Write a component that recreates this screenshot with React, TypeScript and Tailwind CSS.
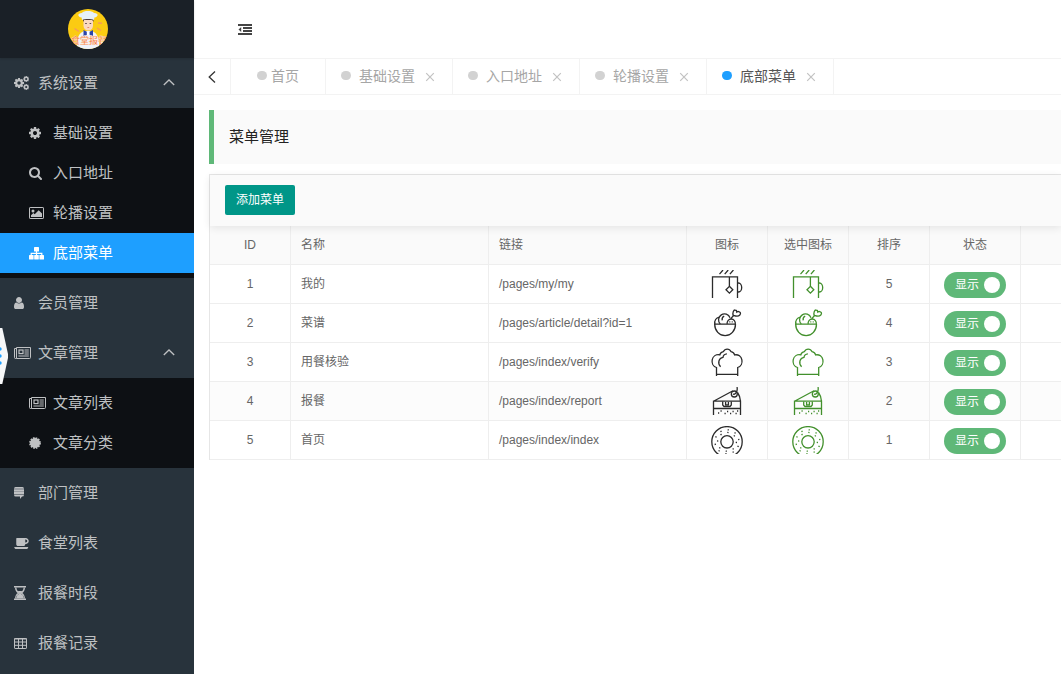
import React, { useState } from "react";

interface IconProps {
  className?: string;
}

interface MenuItem {
  title: string;
  icon: React.ReactNode;
  children?: MenuItem[];
}

interface Row {
  id: number;
  name: string;
  link: string;
  icon: React.FC<IconProps>;
  sort: number;
}

// Iconos del menú lateral
const Glyph: React.FC<{ viewBox: string; size: string; children: React.ReactNode }> = ({
  viewBox,
  size,
  children,
}) => (
  <svg viewBox={viewBox} className={`${size} shrink-0`} fill="currentColor" aria-hidden="true">
    {children}
  </svg>
);

const cogPath =
  "M1152 896q0-106-75-181t-181-75-181 75-75 181 75 181 181 75 181-75 75-181zm512-109v222q0 12-8 23t-20 13l-185 28q-19 54-39 91 35 50 107 138 10 12 10 25t-9 23q-27 37-99 108t-94 71q-12 0-26-9l-138-108q-44 23-91 38-16 136-29 186-7 28-36 28h-222q-14 0-24.5-8.5t-11.5-21.5l-28-184q-49-16-90-37l-141 107q-10 9-25 9-14 0-25-11-126-114-165-168-7-10-7-23 0-12 8-23 15-21 51-66.5t54-70.5q-27-50-41-99l-183-27q-13-2-21-12.5t-8-23.5v-222q0-12 8-23t19-13l186-28q14-46 39-92-40-57-107-138-10-12-10-24 0-10 9-23 26-36 98.5-107.5t94.5-71.5q13 0 26 10l138 107q44-23 91-38 16-136 29-186 7-28 36-28h222q14 0 24.5 8.5t11.5 21.5l28 184q49 16 90 37l142-107q9-9 24-9 13 0 25 10 129 119 165 170 7 8 7 22 0 12-8 23-15 21-51 66.5t-54 70.5q26 50 41 98l183 28q13 2 21 12.5t8 23.5z";

const CogIcon = () => (
  <Glyph viewBox="128 128 1536 1536" size="h-3 w-3">
    <path d={cogPath} />
  </Glyph>
);

const CogsIcon = () => (
  <Glyph viewBox="0 0 15 14" size="h-[14px] w-[15px]">
    <path d={cogPath} transform="translate(-0.9 1.1) scale(0.0066)" />
    <path d={cogPath} transform="translate(8.6 -0.6) scale(0.004)" />
    <path d={cogPath} transform="translate(8.6 7.4) scale(0.004)" />
  </Glyph>
);

const SearchIcon = () => (
  <Glyph viewBox="64 128 1664 1664" size="h-[13px] w-[13px]">
    <path d="M1216 832q0-185-131.5-316.5t-316.5-131.5-316.5 131.5-131.5 316.5 131.5 316.5 316.5 131.5 316.5-131.5 131.5-316.5zm512 832q0 52-38 90t-90 38q-54 0-90-38l-343-342q-179 124-399 124-143 0-273.5-55.5t-225-150-150-225-55.5-273.5 55.5-273.5 150-225 225-150 273.5-55.5 273.5 55.5 225 150 150 225 55.5 273.5q0 220-124 399l343 343q37 37 37 90z" />
  </Glyph>
);

const ImageIcon = () => (
  <Glyph viewBox="0 0 15 12" size="h-3 w-[15px]">
    <rect x="0.5" y="0.5" width="14" height="11" rx="0.6" fill="none" stroke="currentColor" />
    <circle cx="4" cy="4" r="1.5" />
    <path d="M2 10V8.3l2.4-2.4 1.3 1.3 4-4L13 6.5V10z" />
  </Glyph>
);

const SitemapIcon = () => (
  <Glyph viewBox="0 0 15 13" size="h-[13px] w-[15px]">
    <rect x="5" y="0" width="5" height="4.5" rx="0.6" />
    <rect x="0" y="8" width="4.6" height="4.5" rx="0.6" />
    <rect x="5.2" y="8" width="4.6" height="4.5" rx="0.6" />
    <rect x="10.4" y="8" width="4.6" height="4.5" rx="0.6" />
    <path d="M7.5 4v5M2.2 9V6.3h10.6V9" fill="none" stroke="currentColor" strokeWidth="1.2" />
  </Glyph>
);

const UserIcon = () => (
  <Glyph viewBox="256 128 1280 1536" size="h-3 w-[10px]">
    <path d="M1536 1399q0 109-62.5 187t-150.5 78h-854q-88 0-150.5-78t-62.5-187q0-85 8.5-160.5t31.5-152 58.5-131 94-89 134.5-34.5q131 128 313 128t313-128q76 0 134.5 34.5t94 89 58.5 131 31.5 152 8.5 160.5zm-256-887q0 159-112.5 271.5t-271.5 112.5-271.5-112.5-112.5-271.5 112.5-271.5 271.5-112.5 271.5 112.5 112.5 271.5z" />
  </Glyph>
);

const NewsIcon = () => (
  <Glyph viewBox="0 0 17 12" size="h-3 w-[17px]">
    <path
      d="M2.5.5h14v10a1 1 0 0 1-1 1h-13zM2.5 1.5h-2v9a1 1 0 0 0 2 0z"
      fill="none"
      stroke="currentColor"
    />
    <rect x="5" y="3" width="4" height="3.600" fill="none" stroke="currentColor" strokeWidth="1.200" />
    <path d="M10.500 3h4.300M10.500 5h4.300M10.500 7h4.300M4.400 9h10.400" fill="none" stroke="currentColor" />
  </Glyph>
);

const CertificateIcon = () => (
  <Glyph viewBox="0 0 12 12" size="h-3 w-3">
    <circle cx="6" cy="6" r="5" />
    <circle
      cx="6"
      cy="6"
      r="5"
      fill="none"
      stroke="currentColor"
      strokeWidth="1.8"
      strokeDasharray="1.6 1.018"
    />
  </Glyph>
);

const StackIcon = () => (
  <Glyph viewBox="0 0 10 12" size="h-3 w-[10px]">
    <path d="M1.5 0h7Q10 0 10 1.8H0Q0 0 1.5 0zM0 2.2h10v2.2H0zM0 4.800h10V7H0zM0 7.4h10Q10 9.6 8.3 9.6H8L6 12V9.6H1.7Q0 9.6 0 7.4z" />
  </Glyph>
);

const CoffeeIcon = () => (
  <Glyph viewBox="0 512 1856 1408" size="h-[11px] w-[15px]">
    <path d="M1664 896q0-80-56-136t-136-56h-64v384h64q80 0 136-56t56-136zm-1664 768h1792q0 106-75 181t-181 75h-1280q-106 0-181-75t-75-181zm1856-768q0 159-112.5 271.5t-271.5 112.5h-64v32q0 92-66 158t-158 66h-704q-92 0-158-66t-66-158v-736q0-26 19-45t45-19h1152q159 0 271.5 112.5t112.5 271.5z" />
  </Glyph>
);

const HourglassIcon = () => (
  <Glyph viewBox="0 0 12 14" size="h-[14px] w-3">
    <path d="M0 0h12v1.5H0zM0 12.5h12V14H0z" />
    <path
      d="M1.7 1.5C1.7 4.5 3 6 4.8 7 3 8 1.7 9.5 1.7 12.5M10.3 1.5C10.3 4.5 9 6 7.2 7c1.8 1 3.1 2.5 3.1 5.5"
      fill="none"
      stroke="currentColor"
      strokeWidth="1.300"
    />
    <path d="M3.500 5h5L6.800 6.800v1L9 9.500l.8 3H2.200l.8-3 2.200-1.700v-1z" />
  </Glyph>
);

const TableIcon = () => (
  <Glyph viewBox="0 0 13 11" size="h-[11px] w-[13px]">
    <rect x="0.5" y="0.5" width="12" height="10" rx="0.6" fill="none" stroke="currentColor" />
    <path d="M0 1h13M.5 4h12M.5 7.3h12M4.5.5v10M8.5.5v10" fill="none" stroke="currentColor" />
  </Glyph>
);

const ChevronUp = () => (
  <svg
    viewBox="0 0 12 8"
    className="h-2 w-3"
    fill="none"
    stroke="currentColor"
    strokeWidth="1.300"
    aria-hidden="true"
  >
    <path d="M.8 6 6 1l5.200 5" />
  </svg>
);

// Iconos de comida de la tabla
const Drawing: React.FC<{ className?: string; children: React.ReactNode }> = ({
  className = "",
  children,
}) => (
  <svg
    viewBox="0 0 32 28"
    className={`mx-auto h-7 w-8 ${className}`}
    fill="none"
    stroke="currentColor"
    strokeWidth="1.3"
    aria-hidden="true"
  >
    {children}
  </svg>
);

const MugIcon: React.FC<IconProps> = ({ className }) => (
  <Drawing className={className}>
    <path d="M1.5 28V6.8h25V28M18.4 7v9.3M26.5 13h1a3.2 4.5 0 0 1 0 9h-1" />
    <path d="m18.4 16.3 3.4 3.4-3.4 3.4-3.4-3.4z" />
    <path d="M8.500 4.200 12 0M13.700 4.200l3.500-4.200M18.900 4.200l3.500-4.200" />
  </Drawing>
);

const BowlIcon: React.FC<IconProps> = ({ className }) => (
  <Drawing className={className}>
    <path d="M3 15.200h22M3.700 15.200a10.400 11.500 0 0 0 20.800 0M8.300 8.200C5 8.800 3.200 11.500 3.900 15" />
    <path d="M9.300 15A5.900 5.900 0 1 1 19 8.800M11.200 11.400c-.4-2 .4-3.600 2-4.300" />
    <path d="M16.200 15a4.100 4.100 0 1 1 8 0M18.300 12.800h1M20.700 12.800h1M19.800 9.600l3-3.400" />
    <path d="M22.200 6.300c-.8-2.300.2-5.500 2-5.300 1.200.1 1.600 1.100 1.600 2 1-.8 2.800-.6 3.500.6.8 1.700-1 3.600-3.200 3.600-1.500 0-2.500-.4-3.900-.9z" />
  </Drawing>
);

const HatIcon: React.FC<IconProps> = ({ className }) => (
  <Drawing className={className}>
    <path d="M5.500 28v-8.500C2 18.500.6 15 1.200 11.900 1.900 8.400 5 6.200 8.800 6.900c.5-1.900 1.700-2.900 3.500-3.200 1.700-3.500 6.100-3.500 7.800 0 1.800.3 3 1.300 3.500 3.200 3.800-.7 6.700 1.500 7.300 5 .5 3.100-.7 6.600-4.200 7.600V28M5.500 26.300h21.200" />
    <path d="M9.600 18.700c-3.400-3.500-1.800-8.900 2.400-9.400.2-2 1.700-3.300 3.900-3.500" />
  </Drawing>
);

const CakeIcon: React.FC<IconProps> = ({ className }) => (
  <Drawing className={className}>
    <path d="M2.500 28V14.200h27V28M2.500 21.500h27M2.500 14.200 22 3.700M26.500 5.500c1.800 2.400 2.600 5.200 3 8.700" />
    <circle cx="23.300" cy="7" r="3" />
    <path d="M22 7c1.500 1 3.500-1 4-3.400.3-1.300.3-2.500 0-3.600M11.700 14.500V18l1.300 1.500h6l1.300-1.500v-3.500M14.600 15v2.800h2.800V15" />
    <path d="M7 26h1.200M9.500 24h1.200M13.500 26.500h1.200M16 24.500h1.200M19 26.500h1.200M21.500 24.500h1.200M24.500 26.500h1.200M26 24h1.200" />
  </Drawing>
);

const DonutIcon: React.FC<IconProps> = ({ className }) => (
  <Drawing className={className}>
    <circle cx="16" cy="15.800" r="15.200" />
    <circle cx="16" cy="15.800" r="6.200" />
    <circle cx="16" cy="15.800" r="9.400" strokeDasharray="1.300 6.083" />
    <circle cx="16" cy="15.800" r="12" strokeDasharray="1.300 6.240" strokeDashoffset="3.500" />
  </Drawing>
);

const menu: MenuItem[] = [
  {
    title: "系统设置",
    icon: <CogsIcon />,
    children: [
      { title: "基础设置", icon: <CogIcon /> },
      { title: "入口地址", icon: <SearchIcon /> },
      { title: "轮播设置", icon: <ImageIcon /> },
      { title: "底部菜单", icon: <SitemapIcon /> },
    ],
  },
  { title: "会员管理", icon: <UserIcon /> },
  {
    title: "文章管理",
    icon: <NewsIcon />,
    children: [
      { title: "文章列表", icon: <NewsIcon /> },
      { title: "文章分类", icon: <CertificateIcon /> },
    ],
  },
  { title: "部门管理", icon: <StackIcon /> },
  { title: "食堂列表", icon: <CoffeeIcon /> },
  { title: "报餐时段", icon: <HourglassIcon /> },
  { title: "报餐记录", icon: <TableIcon /> },
];

const tabs = ["基础设置", "入口地址", "轮播设置", "底部菜单"];

const rows: Row[] = [
  { id: 1, name: "我的", link: "/pages/my/my", icon: MugIcon, sort: 5 },
  { id: 2, name: "菜谱", link: "/pages/article/detail?id=1", icon: BowlIcon, sort: 4 },
  { id: 3, name: "用餐核验", link: "/pages/index/verify", icon: HatIcon, sort: 3 },
  { id: 4, name: "报餐", link: "/pages/index/report", icon: CakeIcon, sort: 2 },
  { id: 5, name: "首页", link: "/pages/index/index", icon: DonutIcon, sort: 1 },
];

const Logo = () => (
  <svg viewBox="0 0 40 40" className="h-10 w-10 rounded-full">
    <rect width="40" height="40" fill="#fbcb12" />
    <path d="M9 40c-1-11 2-16 7-18h8c5 2 8 7 7 18z" fill="#eef3fb" />
    <path d="M15.500 10h9.500v6.500c0 3-2.200 5-4.700 5s-4.800-2-4.800-5z" fill="#fbd9c0" />
    <path d="M15 13V9.500h10.500V13l-1.300-2h-8z" fill="#4a3a3c" />
    <path d="M17.200 14.500h1.600M21.600 14.500h1.600" stroke="#4a3a3c" strokeWidth=".9" />
    <path d="M19.400 18.500h1.800" stroke="#e0745a" strokeWidth=".8" />
    <path
      d="M14 11 13.600 8.500C9 8 9.500 3.800 14 4c1.500-2.600 10-2.600 12 0 4.500-.2 5 4 .4 4.500L26 11c-3-1.400-9-1.400-12 0z"
      fill="#e6f1fb"
    />
    <path d="m15.500 21 4.700 2.500L25 21v6L20.200 25.500 15.500 27z" fill="#2b44a8" />
    <path d="M18.800 22.500h2.800V26h-2.800z" fill="#fff" />
    <path d="m6.500 19.500 4.500 3M30 14l4 .3M29 19l4 2.500" stroke="#f59a5c" strokeWidth="1.400" />
    <text
      x="21"
      y="35"
      textAnchor="middle"
      fontSize="9"
      fontWeight="700"
      fill="#f4733d"
      stroke="#ffe9d2"
      strokeWidth=".3"
    >
      食堂报餐
    </text>
  </svg>
);

const Sidebar: React.FC<{ active: string; onSelect: (title: string) => void }> = ({
  active,
  onSelect,
}) => (
  <aside className="relative w-[194px] shrink-0 bg-[#28333c] text-[15px] text-[#bfc1c3]">
    <div className="flex h-[58px] items-center bg-[#1a2027] pl-[68px] shadow-[0_1px_2px_rgba(0,0,0,0.15)]">
      <Logo />
    </div>
    <nav>
      {menu.map((item) => (
        <div key={item.title}>
          <button className="flex h-[50px] w-full items-center pr-[19px] pl-[14px]">
            <span className="flex w-6 items-center">{item.icon}</span>
            <span>{item.title}</span>
            {item.children && (
              <span className="ml-auto">
                <ChevronUp />
              </span>
            )}
          </button>
          {item.children && (
            <div className="bg-[#0d1014] py-[5px]">
              {item.children.map((child) => (
                <button
                  key={child.title}
                  onClick={() => onSelect(child.title)}
                  className={`flex h-10 w-full items-center pl-[29px] ${
                    active === child.title ? "bg-[#1e9fff] text-white" : ""
                  }`}
                >
                  <span className="flex w-6 items-center">{child.icon}</span>
                  <span>{child.title}</span>
                </button>
              ))}
            </div>
          )}
        </div>
      ))}
    </nav>
    {/* Pestaña flotante del borde */}
    <svg viewBox="0 0 8 56" className="absolute top-[328px] left-0 h-14 w-2" aria-hidden="true">
      <path d="M0 0h2.300L8 26v4L2.300 56H0z" fill="#f7f8f9" />
      <g fill="#1e9fff">
        <circle cx="0" cy="21" r="1.700" />
        <circle cx="0" cy="28" r="1.700" />
        <circle cx="0" cy="35" r="1.700" />
      </g>
    </svg>
  </aside>
);

const TabBar: React.FC<{ active: string; onSelect: (title: string) => void }> = ({
  active,
  onSelect,
}) => (
  <div className="flex h-[37px] border-y border-[#f3f3f3] text-sm text-[#a6a6a6]">
    <button
      aria-label="向左"
      className="flex w-[37px] shrink-0 items-center justify-center border-r border-[#f3f3f3] text-[#333]"
    >
      <svg viewBox="0 0 8 12" className="h-3 w-2" fill="none" stroke="currentColor" strokeWidth="1.300">
        <path d="M7 .5 1.200 6 7 11.500" />
      </svg>
    </button>
    <button
      onClick={() => onSelect("首页")}
      className="flex shrink-0 items-center gap-1 border-r border-[#f3f3f3] px-[26px] pb-[2px]"
    >
      <span className="h-[9px] w-[10px] rounded-full bg-[#d2d2d2]" />
      首页
    </button>
    {tabs.map((tab) => (
      <div
        key={tab}
        className="flex shrink-0 items-center border-r border-[#f3f3f3] pr-[17px] pb-[2px] pl-[15px]"
      >
        <button
          onClick={() => onSelect(tab)}
          className={`flex items-center gap-2 ${active === tab ? "text-[#555]" : ""}`}
        >
          <span
            className={`h-[9px] w-[10px] rounded-full ${
              active === tab ? "bg-[#1e9fff]" : "bg-[#d2d2d2]"
            }`}
          />
          {tab}
        </button>
        <button aria-label={`关闭${tab}`} className="ml-[10px] pt-[2px] text-[#c2c2c2]">
          <svg viewBox="0 0 10 10" className="h-[10px] w-[10px]" stroke="currentColor" strokeWidth="1.200">
            <path d="m1.200 1.200 7.600 7.600M8.800 1.200 1.200 8.800" />
          </svg>
        </button>
      </div>
    ))}
  </div>
);

const Switch: React.FC<{ name: string }> = ({ name }) => {
  const [on, setOn] = useState(true);

  return (
    <label
      className={`relative mx-auto mt-px flex h-[26px] w-[62px] items-center justify-between rounded-full pr-[6px] pl-[11px] text-white ${
        on ? "bg-[#5fb878]" : "bg-[#d2d2d2]"
      }`}
    >
      <input
        type="checkbox"
        aria-label={name}
        checked={on}
        onChange={() => setOn(!on)}
        className="sr-only"
      />
      <span>显示</span>
      <span className="h-4 w-4 rounded-full bg-white" />
    </label>
  );
};

const MenuTable = () => (
  <table className="w-full min-w-[1000px] table-fixed border-separate border-spacing-0 text-xs text-[#666] [&_td]:h-[39px] [&_td]:border-r [&_td]:border-b [&_td]:border-[#eee] [&_td]:p-0 [&_th]:h-[39px] [&_th]:border-r [&_th]:border-b [&_th]:border-[#eee] [&_th]:p-0 [&_th]:font-normal">
    <colgroup>
      <col className="w-[81px]" />
      <col className="w-[198px]" />
      <col className="w-[198px]" />
      <col className="w-[81px]" />
      <col className="w-[81px]" />
      <col className="w-[81px]" />
      <col className="w-[91px]" />
      <col />
    </colgroup>
    <thead className="bg-[#fafafa]">
      <tr>
        <th>ID</th>
        <th className="text-left">
          <span className="pl-[10px]">名称</span>
        </th>
        <th className="text-left">
          <span className="pl-[10px]">链接</span>
        </th>
        <th>图标</th>
        <th>选中图标</th>
        <th>排序</th>
        <th>状态</th>
        <th />
      </tr>
    </thead>
    <tbody>
      {rows.map((row) => (
        <tr key={row.id} className={row.id === 4 ? "bg-[#fcfcfc]" : ""}>
          <td className="text-center">{row.id}</td>
          <td>
            <span className="pl-[10px]">{row.name}</span>
          </td>
          <td>
            <span className="pl-[10px]">{row.link}</span>
          </td>
          <td>
            <row.icon className="text-[#2b2b2b]" />
          </td>
          <td>
            <row.icon className="text-[#42902c]" />
          </td>
          <td className="text-center">{row.sort}</td>
          <td>
            <Switch name={row.name} />
          </td>
          <td />
        </tr>
      ))}
    </tbody>
  </table>
);

const App: React.FC = () => {
  const [active, setActive] = useState("底部菜单");

  return (
    <div className="flex min-h-screen bg-white font-['Liberation_Sans','Noto_Sans_CJK_SC',sans-serif]">
      <Sidebar active={active} onSelect={setActive} />
      <div className="min-w-0 flex-1 overflow-hidden">
        <header className="flex h-[58px] items-center pl-11">
          <button aria-label="收起菜单" className="text-[#444]">
            <svg viewBox="0 0 14 11" className="h-[11px] w-[14px]" fill="currentColor">
              <path d="M0 0h14v2H0zM5 3h9v2H5zM5 6h9v2H5zM0 9h14v2H0zM3.200 3v5L.5 5.500z" />
            </svg>
          </button>
        </header>
        <TabBar active={active} onSelect={setActive} />
        <main className="pt-[15px] pl-[15px]">
          <h1 className="flex h-[54px] items-center border-l-[5px] border-[#5fb878] bg-[#fafafa] pl-[15px] text-[15px] text-[#222]">
            菜单管理
          </h1>
          <section className="mt-[10px] border-t border-l border-[#e6e6e6]">
            <div className="relative flex h-[51px] items-start bg-[#fafafa] px-[15px] pt-[10px] shadow-[0_2px_8px_rgba(0,0,0,0.09)]">
              <button className="h-[30px] rounded-xs bg-[#009688] px-[11px] text-xs text-white">
                添加菜单
              </button>
            </div>
            <MenuTable />
          </section>
        </main>
      </div>
    </div>
  );
};

export default App;
